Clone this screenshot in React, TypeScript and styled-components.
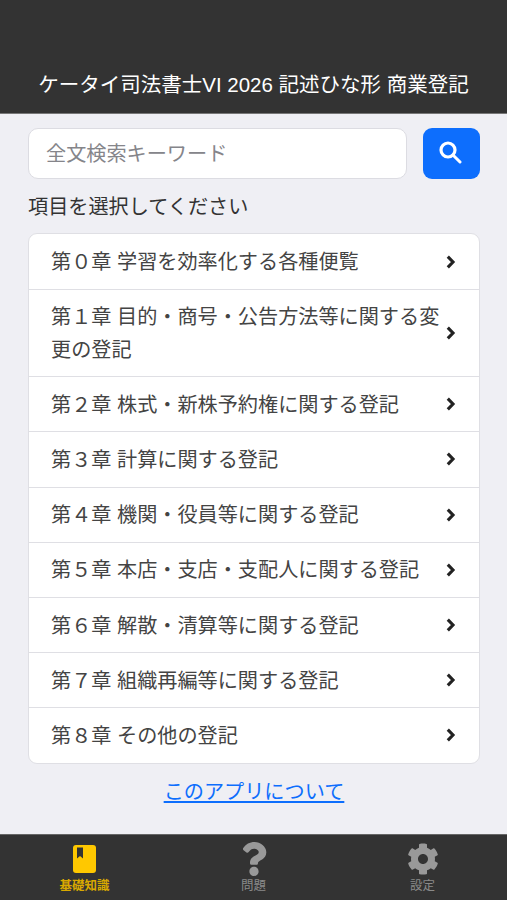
import React from "react";
import styled, { createGlobalStyle } from "styled-components";
import { FaQuestion, FaCog } from "react-icons/fa";

const GlobalStyle = createGlobalStyle`
  html, body { margin: 0; padding: 0; height: 100%; background: #efeff4; }
  body { font-family: "Liberation Sans", "Noto Sans CJK JP", sans-serif; color: #333; }
  #root { height: 100%; }
  * { box-sizing: border-box; }
`;

const Page = styled.div`
  width: 507px;
  height: 900px;
  display: flex;
  flex-direction: column;
  overflow: hidden;
`;

const Header = styled.header`
  height: 114px;
  flex: none;
  background: #333;
  border-bottom: 1px solid #777;
  display: flex;
  align-items: flex-end;
  justify-content: center;
  padding-bottom: 14px;
  color: #fff;
  font-size: 20.5px;
  line-height: 29px;
  white-space: nowrap;
`;

const Main = styled.main`
  flex: 1;
  padding: 14px 27px 0 28px;
  display: flex;
  flex-direction: column;
`;

const SearchRow = styled.div`
  display: flex;
  gap: 16px;
`;

const SearchInput = styled.input`
  flex: 1;
  min-width: 0;
  height: 51px;
  padding: 2px 17px 0;
  border: 1.5px solid #dcdce2;
  border-radius: 10px;
  background: #fff;
  font-family: inherit;
  font-size: 20.15px;
  outline: none;
  &::placeholder { color: #85858a; opacity: 1; }
`;

const SearchButton = styled.button`
  flex: none;
  width: 57px;
  height: 51px;
  border: 0;
  border-radius: 9px;
  background: #0d6efd;
  color: #fff;
  display: flex;
  align-items: center;
  justify-content: center;
  padding: 0 3px 3px 0;
`;

const Prompt = styled.div`
  margin-top: 14px;
  font-size: 20.15px;
  line-height: 29px;
  color: #333;
`;

const List = styled.ul`
  list-style: none;
  margin: 11px 0 0;
  padding: 0;
  background: #fff;
  border: 1px solid #dfdfe4;
  border-radius: 9px;
  overflow: hidden;
`;

const Row = styled.li`
  display: flex;
  align-items: center;
  padding: 11px 22px 9px;
  min-height: 55.2px;
  font-size: 20.15px;
  line-height: 33px;
  color: #444;
  & + & { border-top: 1.5px solid #dfdfe4; }
`;

const RowText = styled.span`
  flex: 1;
  min-width: 0;
`;

const ChevronSvg = styled.svg`
  flex: none;
  margin-left: 3px;
  margin-right: 1px;
  margin-top: -2px;
  width: 11px;
  height: 14px;
`;

const Chevron = () => (
  <ChevronSvg viewBox="0 0 11 14" aria-hidden="true">
    <path d="M2.8 1.6 8 7l-5.2 5.4" fill="none" stroke="#222" strokeWidth="3.1" />
  </ChevronSvg>
);

const AboutLink = styled.a`
  margin-top: 14px;
  text-align: center;
  font-size: 20.15px;
  line-height: 29px;
  color: #0d6efd;
  text-decoration: underline;
`;

const TabBar = styled.nav`
  height: 66px;
  flex: none;
  background: #333;
  border-top: 1px solid #666;
  display: grid;
  grid-template-columns: 1fr 1fr 1fr;
`;

const Tab = styled.div`
  display: flex;
  flex-direction: column;
  align-items: center;
  padding-top: 6px;
  color: #999;
  font-size: 12.5px;
  line-height: 14px;
`;

const TabIcon = styled.div`
  height: 35px;
  display: flex;
  align-items: center;
  justify-content: center;
`;

const TabLabel = styled.span<{ $active?: boolean }>`
  margin-top: 3px;
  color: ${(p) => (p.$active ? "#d9a900" : "#8a8a8a")};
  font-weight: ${(p) => (p.$active ? 700 : 400)};
`;

const BookIcon = () => (
  <svg width="23" height="28" viewBox="0 0 23 28" aria-hidden="true">
    <rect width="23" height="28" rx="3" fill="#ffc800" />
    <path d="M4 2.5h6v11l-3-2.6-3 2.6z" fill="#333" />
  </svg>
);

const SearchIcon = () => (
  <svg width="24" height="24" viewBox="0 0 24 24" aria-hidden="true">
    <circle cx="10" cy="10" r="7" fill="none" stroke="#fff" strokeWidth="3.2" />
    <path d="M15.2 15.2 22 22" fill="none" stroke="#fff" strokeWidth="3" strokeLinecap="round" />
  </svg>
);

const chapters = [
  "第０章 学習を効率化する各種便覧",
  "第１章 目的・商号・公告方法等に関する変更の登記",
  "第２章 株式・新株予約権に関する登記",
  "第３章 計算に関する登記",
  "第４章 機関・役員等に関する登記",
  "第５章 本店・支店・支配人に関する登記",
  "第６章 解散・清算等に関する登記",
  "第７章 組織再編等に関する登記",
  "第８章 その他の登記",
];

export default function App() {
  return (
    <Page>
      <GlobalStyle />
      <Header>ケータイ司法書士VI 2026 記述ひな形 商業登記</Header>
      <Main>
        <SearchRow>
          <SearchInput placeholder="全文検索キーワード" />
          <SearchButton aria-label="検索">
            <SearchIcon />
          </SearchButton>
        </SearchRow>
        <Prompt>項目を選択してください</Prompt>
        <List>
          {chapters.map((c) => (
            <Row key={c}>
              <RowText>{c}</RowText>
              <Chevron />
            </Row>
          ))}
        </List>
        <AboutLink href="#">このアプリについて</AboutLink>
      </Main>
      <TabBar>
        <Tab>
          <TabIcon><BookIcon /></TabIcon>
          <TabLabel $active>基礎知識</TabLabel>
        </Tab>
        <Tab>
          <TabIcon><FaQuestion size={34} /></TabIcon>
          <TabLabel>問題</TabLabel>
        </Tab>
        <Tab>
          <TabIcon><FaCog size={32} /></TabIcon>
          <TabLabel>設定</TabLabel>
        </Tab>
      </TabBar>
    </Page>
  );
}
